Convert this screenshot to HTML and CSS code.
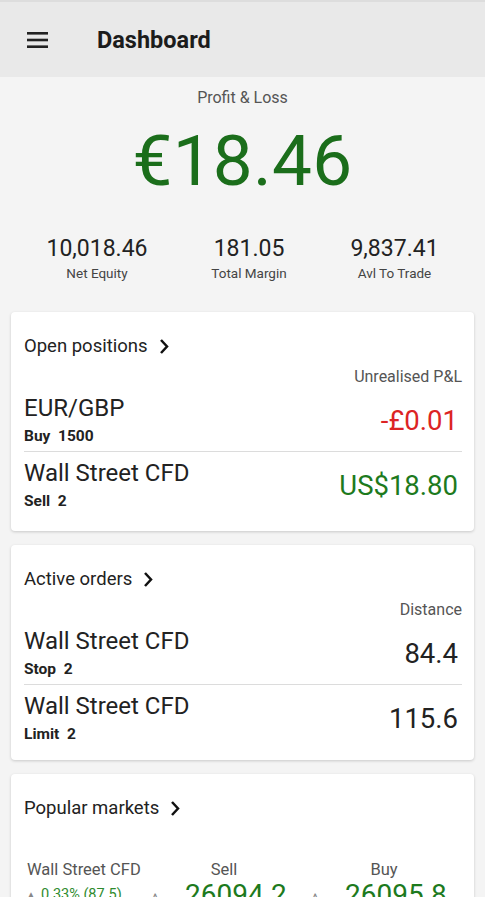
FILE: index.html
```html
<!DOCTYPE html>
<html>
<head>
<meta charset="utf-8">
<link rel="stylesheet" href="styles.css">
</head>
<body>
<div class="page">
  <header class="appbar">
    <svg class="menu" width="21" height="18" viewBox="0 0 21 18"><rect x="0" y="1" width="21" height="2.6" fill="#222"/><rect x="0" y="7.7" width="21" height="2.6" fill="#222"/><rect x="0" y="14.4" width="21" height="2.6" fill="#222"/></svg>
    <h1 class="title">Dashboard</h1>
  </header>

  <section class="summary">
    <div class="pl-label">Profit &amp; Loss</div>
    <div class="pl-value">€18.46</div>
    <div class="stats">
      <div class="stat"><div class="stat-num">10,018.46</div><div class="stat-label">Net Equity</div></div>
      <div class="stat"><div class="stat-num">181.05</div><div class="stat-label">Total Margin</div></div>
      <div class="stat"><div class="stat-num">9,837.41</div><div class="stat-label">Avl To Trade</div></div>
    </div>
  </section>

  <section class="card">
    <div class="card-head">Open positions <svg class="chev" width="10" height="17" viewBox="0 0 10 17"><path d="M2 2 L8 8.5 L2 15" fill="none" stroke="#111" stroke-width="2.5"/></svg></div>
    <div class="col-label">Unrealised P&amp;L</div>
    <div class="row">
      <div class="row-main"><div class="row-name">EUR/GBP</div><div class="row-sub">Buy&nbsp; 1500</div></div>
      <div class="row-val red">-£0.01</div>
    </div>
    <div class="row divided">
      <div class="row-main"><div class="row-name">Wall Street CFD</div><div class="row-sub">Sell&nbsp; 2</div></div>
      <div class="row-val green">US$18.80</div>
    </div>
  </section>

  <section class="card orders">
    <div class="card-head">Active orders <svg class="chev" width="10" height="17" viewBox="0 0 10 17"><path d="M2 2 L8 8.5 L2 15" fill="none" stroke="#111" stroke-width="2.5"/></svg></div>
    <div class="col-label">Distance</div>
    <div class="row">
      <div class="row-main"><div class="row-name">Wall Street CFD</div><div class="row-sub">Stop&nbsp; 2</div></div>
      <div class="row-val">84.4</div>
    </div>
    <div class="row divided">
      <div class="row-main"><div class="row-name">Wall Street CFD</div><div class="row-sub">Limit&nbsp; 2</div></div>
      <div class="row-val">115.6</div>
    </div>
  </section>

  <section class="card last">
    <div class="card-head">Popular markets <svg class="chev" width="10" height="17" viewBox="0 0 10 17"><path d="M2 2 L8 8.5 L2 15" fill="none" stroke="#111" stroke-width="2.5"/></svg></div>
    <div class="market">
      <div class="m-col m-name">
        <div class="m-label">Wall Street CFD</div>
        <div class="m-change"><span class="tri">▲</span>0.33% (87.5)</div>
      </div>
      <div class="m-col m-price">
        <div class="m-label">Sell</div>
        <div class="m-big"><span class="caret">^</span><span>26094.2</span></div>
      </div>
      <div class="m-col m-price">
        <div class="m-label">Buy</div>
        <div class="m-big"><span class="caret">^</span><span>26095.8</span></div>
      </div>
    </div>
  </section>
</div>
</body>
</html>
```

FILE: styles.css
```css
* { box-sizing: border-box; }
html, body { margin: 0; padding: 0; }
body {
  background: #ffffff;
  font-family: Roboto, "Liberation Sans", Arial, sans-serif;
  color: #222;
}
.page {
  height: 897px;
  overflow: hidden;
  background: #f4f4f4;
}
.appbar {
  height: 77px;
  background: #e9e9e9;
  border-top: 2px solid #dddddd;
  display: flex;
  align-items: center;
  padding-left: 27px;
}
.menu { display: block; margin-top: 0; }
.title {
  margin: 0 0 0 49px;
  font-size: 23.5px;
  font-weight: 700;
  color: #1c1c1c;
}
.summary {
  padding-top: 10px;
  text-align: center;
}
.pl-label {
  font-size: 16px;
  line-height: 22px;
  color: #555;
}
.pl-value {
  font-size: 71px;
  line-height: 84px;
  margin-top: 10px;
  color: #1b6e1b;
  letter-spacing: 0.3px;
}
.stats {
  display: grid;
  grid-template-columns: 154px 150px 1fr;
  padding: 32px 20px 0 20px;
}
.stat-num {
  font-size: 23px;
  line-height: 28px;
  color: #222;
}
.stat-label {
  font-size: 13.5px;
  line-height: 20px;
  color: #444;
}
.card {
  margin: 29px 11px 0 11px;
  background: #fff;
  border-radius: 4px;
  box-shadow: 0 1px 3px rgba(0,0,0,0.18);
  padding: 20px 12px 15px 13px;
}
.card + .card { margin-top: 14px; }
.card.orders { padding-bottom: 11px; }
.card-head {
  font-size: 18.5px;
  line-height: 28px;
  color: #222;
  display: flex;
  align-items: center;
  gap: 11px;
}
.chev { display: block; }
.col-label {
  text-align: right;
  font-size: 16px;
  line-height: 20px;
  color: #555;
  margin-top: 7px;
}
.row {
  display: flex;
  justify-content: space-between;
  align-items: center;
  padding: 6px 0 2px;
}
.row.divided {
  border-top: 1px solid #dcdcdc;
  padding-top: 6px;
}
.row-name {
  font-size: 24px;
  line-height: 30px;
  color: #222;
}
.row-sub {
  font-size: 15.5px;
  font-weight: 700;
  line-height: 26px;
  color: #222;
}
.row-val {
  font-size: 27.5px;
  line-height: 32px;
  color: #222;
  padding-right: 4px;
}
.red { color: #dc2424; }
.green { color: #1d7a1d; }
.card.last { padding-bottom: 40px; }
.market {
  display: grid;
  grid-template-columns: 114px 148px 148px;
  column-gap: 12px;
  margin-top: 37px;
}
.m-name { padding-left: 3px; white-space: nowrap; }
.m-label {
  font-size: 16.5px;
  line-height: 22px;
  color: #555;
}
.m-price .m-label { text-align: center; }
.m-change {
  font-size: 14.5px;
  line-height: 28px;
  color: #2e8b2e;
}
.tri { font-size: 8px; color: #888; margin-right: 6px; vertical-align: middle; }
.m-big {
  display: flex;
  align-items: baseline;
  font-size: 28px;
  line-height: 28px;
  color: #1d7a1d;
}
.caret {
  font-size: 15px;
  color: #888;
  width: 35px;
  padding-left: 2px;
}
```
